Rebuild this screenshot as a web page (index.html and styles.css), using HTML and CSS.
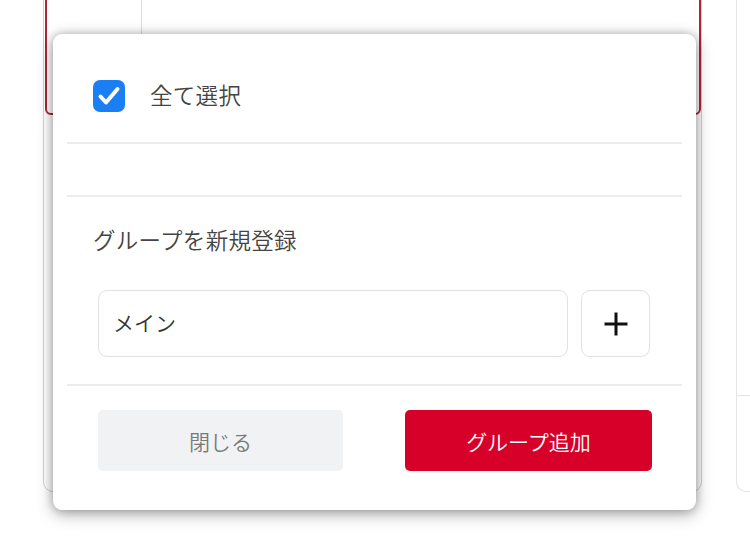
FILE: index.html
```html
<!DOCTYPE html>
<html lang="ja">
<head>
<meta charset="utf-8">
<link rel="stylesheet" href="styles.css">
</head>
<body>
<div class="page">
  <div class="back-card">
    <div class="red-box">
      <div class="col-first"></div>
      <div class="col-rest"></div>
    </div>
  </div>
  <div class="side-card">
    <div class="side-top"></div>
  </div>

  <div class="modal">
    <div class="sec-select">
      <span class="checkbox">
        <svg width="32" height="32" viewBox="0 0 32 32"><polyline points="7.5,16.5 13,22.5 24.5,9" fill="none" stroke="#fff" stroke-width="4" stroke-linecap="round" stroke-linejoin="round"/></svg>
      </span>
      <span class="label">全て選択</span>
    </div>
    <div class="divider"></div>
    <div class="spacer"></div>
    <div class="divider"></div>
    <div class="sec-new">
      <div class="label">グループを新規登録</div>
      <div class="input-row">
        <div class="input">メイン</div>
        <button class="plus">
          <svg width="26" height="26" viewBox="0 0 26 26"><path d="M13 1.5V24.5M1.5 13H24.5" stroke="#111" stroke-width="3"/></svg>
        </button>
      </div>
    </div>
    <div class="divider"></div>
    <div class="actions">
      <button class="btn btn-close">閉じる</button>
      <button class="btn btn-add">グループ追加</button>
    </div>
  </div>
</div>
</body>
</html>
```
FILE: styles.css
```css
html, body {
  margin: 0;
  padding: 0;
  background: #fff;
  overflow: hidden;
}
body {
  font-family: "Noto Sans CJK JP", "Noto Sans", sans-serif;
  color: #444;
}
.page {
  position: relative;
  width: 750px;
  height: 547px;
  display: flex;
  align-items: flex-start;
}
.back-card {
  margin-left: 43px;
  margin-top: -12px;
  width: 661px;
  height: 502px;
  border: 1px solid #d2d2d2;
  border-radius: 10px;
  background: #fff;
  display: flex;
  flex-direction: column;
}
.red-box {
  margin-left: 1px;
  width: 656px;
  height: 126px;
  border: 2px solid #a8283a;
  border-radius: 0 0 6px 6px;
  display: flex;
  box-sizing: border-box;
}
.col-first {
  width: 94px;
  border-right: 1px solid #dcdcdc;
}
.side-card {
  margin-left: 34px;
  margin-top: -12px;
  width: 40px;
  height: 502px;
  border: 1px solid #e4e4e4;
  border-radius: 10px 0 0 10px;
  border-right: none;
}
.side-top {
  height: 406px;
  border-bottom: 1px solid #e4e4e4;
}
.modal {
  position: absolute;
  left: 53px;
  top: 34px;
  width: 643px;
  height: 476px;
  background: #fff;
  border-radius: 9px;
  box-shadow: 0 4px 16px rgba(0, 0, 0, 0.34), 0 0 8px rgba(0, 0, 0, 0.2);
  display: flex;
  flex-direction: column;
  box-sizing: border-box;
}
.sec-select {
  height: 108px;
  box-sizing: border-box;
  padding: 46px 0 0 40px;
  display: flex;
  align-items: flex-start;
}
.checkbox {
  width: 32px;
  height: 32px;
  border-radius: 7px;
  background: #1a7ff3;
  display: flex;
}
.label {
  font-size: 22.5px;
  line-height: 28px;
  font-weight: 350;
  color: #444;
  letter-spacing: 0.3px;
}
.sec-select .label {
  margin-left: 25px;
}
.divider {
  height: 2px;
  margin: 0 14px;
  background: #ececec;
}
.spacer {
  height: 51px;
}
.sec-new {
  padding: 28px 46px 0 40px;
  height: 187px;
  box-sizing: border-box;
}
.input-row {
  margin-top: 37px;
  margin-left: 5px;
  display: flex;
  gap: 13px;
}
.input {
  width: 470px;
  height: 67px;
  box-sizing: border-box;
  border: 1.5px solid #e2e2e2;
  border-radius: 9px;
  padding: 0 0 3px 14px;
  display: flex;
  align-items: center;
  font-size: 21px;
  font-weight: 350;
  color: #333;
}
.plus {
  width: 69px;
  height: 67px;
  box-sizing: border-box;
  border: 1.5px solid #e2e2e2;
  border-radius: 9px;
  background: #fff;
  padding: 0;
  display: flex;
  align-items: center;
  justify-content: center;
}
.actions {
  padding: 24px 44px 0 45px;
  display: flex;
  justify-content: space-between;
}
.btn {
  height: 61px;
  border: none;
  border-radius: 5px;
  font-family: "Noto Sans CJK JP", "Noto Sans", sans-serif;
  font-size: 21px;
  font-weight: 350;
  padding: 0;
}
.btn-close {
  width: 245px;
  background: #f1f2f4;
  color: #7a7a7a;
}
.btn-add {
  width: 247px;
  background: #d70028;
  color: #fff;
}
```
